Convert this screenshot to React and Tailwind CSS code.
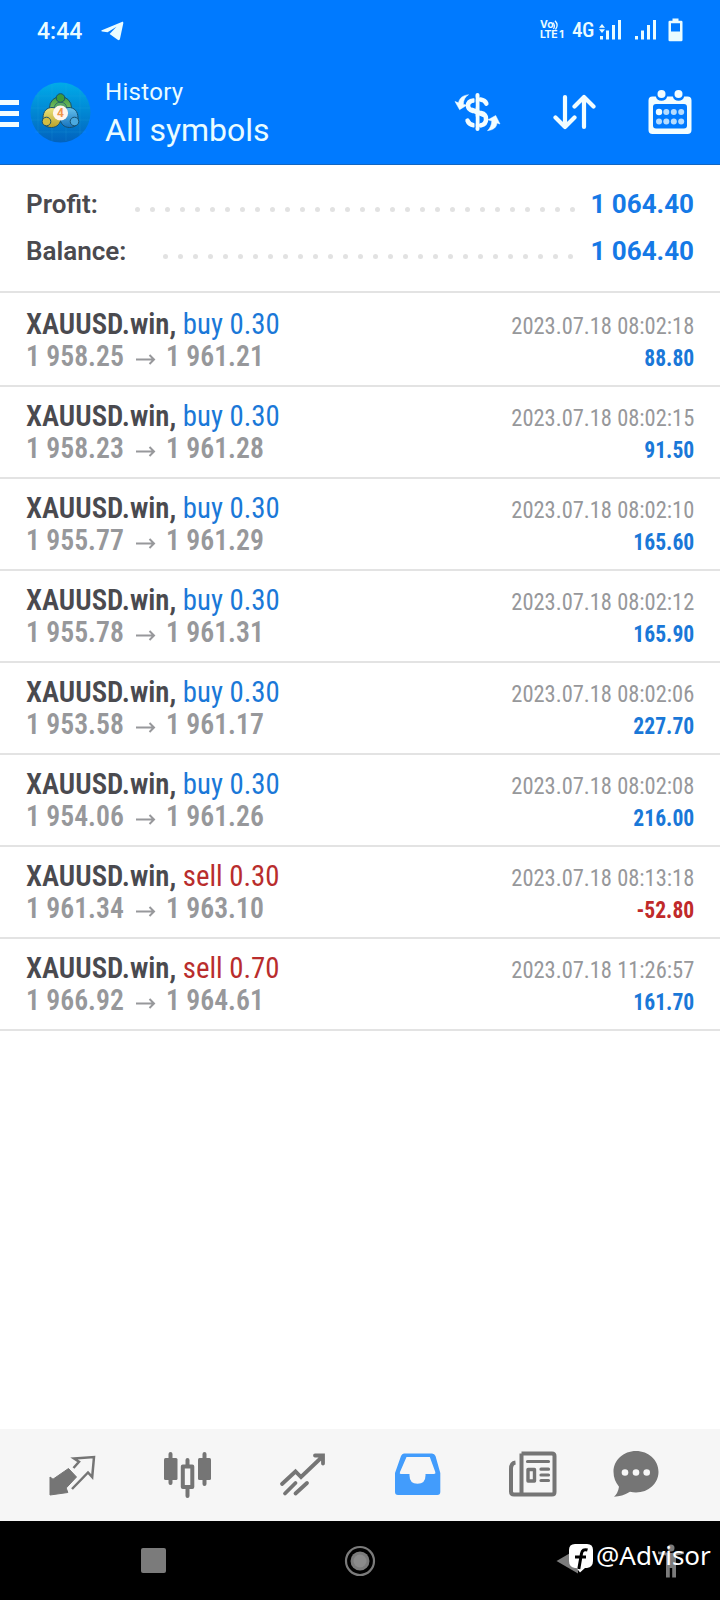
import React from 'react';

const deals = [
  { side: 'buy', volume: '0.30', open: '1 958.25', close: '1 961.21', time: '2023.07.18 08:02:18', profit: '88.80' },
  { side: 'buy', volume: '0.30', open: '1 958.23', close: '1 961.28', time: '2023.07.18 08:02:15', profit: '91.50' },
  { side: 'buy', volume: '0.30', open: '1 955.77', close: '1 961.29', time: '2023.07.18 08:02:10', profit: '165.60' },
  { side: 'buy', volume: '0.30', open: '1 955.78', close: '1 961.31', time: '2023.07.18 08:02:12', profit: '165.90' },
  { side: 'buy', volume: '0.30', open: '1 953.58', close: '1 961.17', time: '2023.07.18 08:02:06', profit: '227.70' },
  { side: 'buy', volume: '0.30', open: '1 954.06', close: '1 961.26', time: '2023.07.18 08:02:08', profit: '216.00' },
  { side: 'sell', volume: '0.30', open: '1 961.34', close: '1 963.10', time: '2023.07.18 08:13:18', profit: '-52.80' },
  { side: 'sell', volume: '0.70', open: '1 966.92', close: '1 964.61', time: '2023.07.18 11:26:57', profit: '161.70' },
];

const SignalBars = () => (
  <svg className="h-5 w-[22px]" viewBox="0 0 22 20" fill="currentColor">
    <rect x="0" y="16" width="3" height="3.5" />
    <rect x="6" y="10.500" width="3" height="9" />
    <rect x="12" y="5" width="3" height="14.500" />
    <rect x="18" y="0" width="3" height="19.500" />
  </svg>
);

const StatusBar = () => (
  <div className="flex h-[60px] items-center pl-[37px] pr-[37px] text-[#eafcff]">
    <span className="mt-[3px] w-[46px] text-[23px] leading-7 font-medium">4:44</span>
    <svg className="mt-px ml-[18px] h-5 w-[23px]" viewBox="0 0 23 20" fill="currentColor">
      <path d="M.8 9.300 20.800.9c1-.4 1.700.2 1.500 1.300L19 17.800c-.3 1.500-1.200 1.700-2.300 1L8.600 12.900 15.500 5.700 6.600 11.200 1.100 10.500C.2 10.300.1 9.600.8 9.300z" />
    </svg>
    <div className="ml-auto flex items-center">
      <div className="relative w-[24px] font-['Inter'] font-bold">
        <p className="text-[10.5px] leading-[10px]">Vo</p>
        <p className="text-[10.5px] leading-[10px] tracking-[-0.4px] whitespace-nowrap">LTE<span className="pl-0.5">1</span></p>
        <svg className="absolute top-0 left-[12px] h-2.5 w-2" viewBox="0 0 8 10" fill="none" stroke="currentColor" strokeWidth="1.300">
          <path d="M1 2.600Q3.500 5.500 1.500 9M3 .8Q7 5 3.500 9.500" />
        </svg>
      </div>
      <span className="ml-[8px] w-5 font-['Roboto_Condensed'] text-[21px] leading-6 font-medium tracking-[-0.4px]">4G</span>
      <div className="relative ml-[8px] flex">
        <SignalBars />
        <svg className="absolute top-[4px] left-[-1px] h-[9px] w-[6px]" viewBox="0 0 6 9" fill="currentColor">
          <path d="M3 0 6 3.800H0zM3 9 0 5.200h6z" />
        </svg>
      </div>
      <div className="ml-[13px] flex">
        <SignalBars />
      </div>
      <svg className="ml-[11px] h-6 w-[15px]" viewBox="0 0 15 24" fill="currentColor">
        <path fillRule="evenodd" d="M4.500 0.500h6v2.200h2.700q1.300 0 1.300 1.300v18q0 1.300-1.300 1.300H1.800Q.5 23.300.5 22V4q0-1.300 1.300-1.300h2.700zM3 5.200v8.300h9V5.200z" />
      </svg>
    </div>
  </div>
);

const Logo = () => (
  <svg className="ml-[11px] size-[61px]" viewBox="0 0 61 61">
    <defs>
      <linearGradient id="disc" x1="0" y1="0" x2="0" y2="1">
        <stop offset="0" stopColor="#00abe9" />
        <stop offset="1" stopColor="#0262bd" />
      </linearGradient>
      <linearGradient id="green" x1="0" y1="0" x2="0" y2="1">
        <stop offset="0" stopColor="#3f9a3e" />
        <stop offset="1" stopColor="#a5da80" />
      </linearGradient>
      <linearGradient id="yellow" x1="0" y1="0" x2="0" y2="1">
        <stop offset="0" stopColor="#ece47c" />
        <stop offset="1" stopColor="#b9a12a" />
      </linearGradient>
      <linearGradient id="blue" x1="0" y1="0" x2="0" y2="1">
        <stop offset="0" stopColor="#67c3ee" />
        <stop offset="1" stopColor="#1672bd" />
      </linearGradient>
    </defs>
    <circle cx="30.500" cy="30.500" r="30" fill="url(#disc)" />
    <path d="M5 14h51M1 26h59M1 38h59M5 50h51M8 10v41M22 2v57M36 2v57M50 8v45" stroke="#35b5e8" strokeOpacity=".2" strokeWidth=".8" />
    <g stroke="#17506f" strokeWidth="1">
      <circle cx="30.500" cy="25.500" r="11" fill="url(#green)" />
      <circle cx="30.500" cy="26.500" r="6.500" fill="#59a866" strokeWidth=".6" />
      <path d="M13 36c0-7 4-10.500 9-10.500 6 0 9 5 9 10 0 6-4 10-9.500 10-3 0-6-1-8.500-4z" fill="url(#yellow)" />
      <path d="M48 36c0-7-4-10.500-9-10.500-6 0-9 5-9 10 0 6 4 10 9.500 10 3 0 6-1 8.500-4z" fill="url(#blue)" />
      <circle cx="30.500" cy="16" r="4.300" fill="#3d9a3c" />
      <circle cx="16.500" cy="39.500" r="4.300" fill="#d3bd42" />
      <circle cx="44.500" cy="39.500" r="4.300" fill="#4ba9df" />
    </g>
    <circle cx="30.500" cy="31" r="7.600" fill="#fff5ec" />
    <text x="30.500" y="35.300" textAnchor="middle" fontFamily="Roboto" fontSize="12" fontWeight="700" fill="#ee9448">4</text>
  </svg>
);

const Header = () => (
  <header className="h-[165px] border-b border-[#1266c2] bg-[#007aff]">
    <StatusBar />
    <div className="flex h-[104px] items-center text-[#f2fdff]">
      <div className="mt-[3px] flex w-[19px] flex-col gap-[6px]">
        <span className="h-[5px] bg-current" />
        <span className="h-[5px] bg-current" />
        <span className="h-[5px] bg-current" />
      </div>
      <Logo />
      <div className="ml-[14px] text-[#e9fcff]">
        <p className="text-2xl leading-[36px] tracking-[0.3px]">History</p>
        <h1 className="text-[32px] leading-[40px]">All symbols</h1>
      </div>
      <svg className="ml-auto h-[40px] w-[48px]" viewBox="0 0 48 40" fill="none" stroke="currentColor">
        <path d="M24.500 3v34" strokeWidth="4" strokeLinecap="round" />
        <path d="M20.500 8.500C13 9.500 13.500 17.500 20 19M27.500 7.500c3.500.5 5 2 5.800 4M28 21c7 1.500 6.500 11 0 12.300M20.500 33.200c-3.500-.5-5-2-5.900-4.500M19 18l11 4.500" strokeWidth="4.600" strokeLinecap="round" />
        <path d="M22 5.500v10M22 24.500v11" stroke="#007aff" strokeWidth="1" />
        <path d="M15.500 2.700C9.500 3.500 6.500 6 5.500 10.800L2 9.500l4.600 8.200 7.200-4.500-3.500-1C10.500 8 12 5 15.500 2.700zM34.500 38.700c6-.8 9-3.300 9.500-7.700l3 1-4.300-8.500-7.700 4.300 3.800 1.300c-.3 4.200-1.800 7.200-4.300 9.600z" fill="currentColor" strokeWidth=".5" strokeLinejoin="round" />
      </svg>
      <svg className="ml-[51px] h-[38px] w-[44px]" viewBox="0 0 44 38" fill="none" stroke="currentColor" strokeWidth="4.200" strokeLinecap="round" strokeLinejoin="round">
        <path d="M13 4v30M3.500 24.500l9.500 9.500 9.500-9.500M32 34V4M22.500 13.500l9.500-9.500 9.500 9.500" />
      </svg>
      <svg className="mr-[27px] ml-[51px] h-[46px] w-[46px]" viewBox="0 0 46 46" fill="currentColor">
        <path fillRule="evenodd" d="M5.500 7.500h3.300q1.300 4.300 5.700 4.300t5.700-4.300h5.600q1.300 4.300 5.700 4.300t5.700-4.300h3.300q4 0 4 4V41q0 4-4 4h-35q-4 0-4-4V11.500q0-4 4-4zM9 15q-3 0-3 3v18.500q0 3 3 3h28q3 0 3-3V18q0-3-3-3z" />
        <circle cx="14.500" cy="5" r="4" />
        <circle cx="31.500" cy="5" r="4" />
        <g fillOpacity=".75">
          <circle cx="12" cy="23" r="3.200" fillOpacity="1" />
          <circle cx="19.300" cy="23" r="3" />
          <circle cx="26.800" cy="23" r="3" />
          <circle cx="34.200" cy="23" r="3" />
          <circle cx="12" cy="32.500" r="3" />
          <circle cx="19.300" cy="32.500" r="3" />
          <circle cx="26.800" cy="32.500" r="3" />
          <circle cx="34.200" cy="32.500" r="3" />
        </g>
      </svg>
    </div>
  </header>
);

const SummaryLine = ({ label, value, dots, dotsClass }) => (
  <div className="flex h-[47px] items-center text-[26px] font-semibold">
    <span className="mt-0.5 text-[#4a4a4f]">{label}</span>
    <div className={`mt-[11px] ml-auto flex gap-[10px] ${dotsClass}`}>
      {Array.from({ length: dots }, (_, i) => (
        <span key={i} className="size-[5px] rounded-full bg-[#e2e2e2]" />
      ))}
    </div>
    <span className="mt-0.5 w-[105px] text-right font-bold whitespace-nowrap text-[#1579e6]">{value}</span>
  </div>
);

const DealRow = ({ deal }) => (
  <li className="flex h-[92px] justify-between border-b-2 border-[#e3e3e3] px-[26px] pt-[13px] font-['Roboto_Condensed'] leading-8 first:h-[94px] first:pt-[15px]">
    <div className="text-[29px]">
      <p className="origin-left scale-x-[0.993] text-[#4a4a4f]">
        <span className="font-semibold">XAUUSD.win,</span>{' '}
        <span className={deal.side === 'buy' ? 'text-[#1a78d8]' : 'text-[#b92d2d]'}>{deal.side} {deal.volume}</span>
      </p>
      <p className="flex font-semibold text-[#97989b]">
        <span className="w-[110px] origin-left scale-x-[0.955]">{deal.open}</span>
        <svg className="mt-[13px] h-[13px] w-[20px]" viewBox="0 0 20 13" fill="none" stroke="currentColor" strokeWidth="2">
          <path d="M0 6.500h18M13.500 2l4.500 4.500-4.500 4.500" />
        </svg>
        <span className="ml-[10px] origin-left scale-x-[0.955]">{deal.close}</span>
      </p>
    </div>
    <div className="pt-0.5 text-right text-2xl leading-8">
      <p className="origin-right scale-x-[0.937] text-[#97989b]">{deal.time}</p>
      <p className={`origin-right scale-x-[0.9] font-bold ${deal.profit.startsWith('-') ? 'text-[#c02a2a]' : 'text-[#1a78d8]'}`}>{deal.profit}</p>
    </div>
  </li>
);

const TabBar = () => (
  <nav className="flex h-[92px] gap-[67px] bg-[#f6f6f6] pt-[21px] pl-12 text-[#757575]">
    <svg className="size-12 shrink-0" viewBox="0 0 48 48">
      <path d="M20.500 18.500 28.500 27l-10.300 11 1.600 4.500L2 45V27l3 2.200z" fill="currentColor" stroke="currentColor" strokeLinejoin="round" />
      <path d="M25.500 18l5.500-6.200-5-3.300 20-1.500-1.800 20-4.200-4.500L24 39" fill="none" stroke="currentColor" strokeWidth="2.500" />
    </svg>
    <svg className="size-12 shrink-0" viewBox="0 0 48 48" fill="none" stroke="currentColor" strokeWidth="4" strokeLinecap="round">
      <path d="M7.500 4v29M41.500 4v30M24.500 10v6M24.500 38v8" />
      <rect x="1" y="8" width="13.500" height="22" rx="1.500" fill="currentColor" stroke="none" />
      <rect x="35" y="8" width="13" height="22" rx="1.500" fill="currentColor" stroke="none" />
      <rect x="19.800" y="16.500" width="9.500" height="20.500" strokeLinejoin="round" />
    </svg>
    <svg className="size-12 shrink-0" viewBox="0 0 48 48" fill="none" stroke="currentColor" strokeWidth="3.800" strokeLinecap="round">
      <path d="M4 34 17.500 21.500l5.500 5.500L44.500 6.500M37 5.500h8v8M7 43.500l10.500-10.500M17.500 43.500 29 33" />
    </svg>
    <svg className="ml-px size-12 shrink-0 text-[#429cfc]" viewBox="0 0 48 48" fill="currentColor">
      <path fillRule="evenodd" d="M10 3.500h28q2.500 0 3.500 2.500L46.300 23v19q0 3-3 3H4q-3 0-3-3V23L7 6q1-2.500 3-2.500zM12.500 7 6 22q-.8 2 .8 2h8.700v1.500q0 8.300 8 8.300t8-8.300V24h8.500q2 0 1.300-2L35.800 7z" />
    </svg>
    <svg className="size-12 shrink-0" viewBox="0 0 48 48" fill="none" stroke="currentColor" strokeWidth="4" strokeLinejoin="round">
      <path d="M12.500 3.500H43q2.500 0 2.500 2.500v36q0 2.500-2.500 2.500H5q-3 0-3-3V19q0-6 4.500-6.500M12.500 3.500v41" />
      <path d="M18.500 11.500h21M32 19.200h7.500M32 25h7.500M32 30.500h7.500" strokeWidth="3.200" strokeLinecap="round" />
      <rect x="19" y="19.500" width="6.500" height="11.500" strokeWidth="3.400" />
    </svg>
    <svg className="-ml-[12px] size-12 shrink-0" viewBox="0 0 48 48">
      <path d="M24 1C36.500 1 46.500 10 46.500 21.800S36.500 42.500 24 42.500q-3 0-6-.8Q10 46.500 2 46.700q4-3.500 5-10Q1.500 30 1.500 21.800C1.500 10 11.500 1 24 1z" fill="currentColor" />
      <g fill="#f6f6f6">
        <circle cx="13" cy="22.500" r="3.300" />
        <circle cx="24" cy="22.500" r="3.300" />
        <circle cx="34.700" cy="22.500" r="3.300" />
      </g>
    </svg>
  </nav>
);

const SystemNav = () => (
  <div className="relative flex h-[79px] items-center bg-black pl-[141px] text-[#7b7b7b]">
    <span className="size-[25px] rounded-[2px] bg-current" />
    <svg className="ml-[178px] size-8" viewBox="0 0 32 32">
      <circle cx="16" cy="16" r="14" fill="none" stroke="currentColor" strokeWidth="2.200" />
      <circle cx="16" cy="16" r="9.500" fill="currentColor" />
      <circle cx="16" cy="16" r="6.500" fill="#8b8b8b" />
    </svg>
    <svg className="ml-[180px] h-[26px] w-[22px]" viewBox="0 0 22 26" fill="currentColor">
      <path d="M.5 13 22 .5v25z" />
    </svg>
    <svg className="ml-[79px] h-[34px] w-[28px]" viewBox="0 0 28 34" fill="currentColor">
      <circle cx="14" cy="4" r="3.500" />
      <path d="M1 7.500 14 9l13-1.500V10l-8 1.500V33.500h-3.800V24h-2.400v9.500H9V11.500L1 10z" />
    </svg>
    <div className="absolute top-[22px] left-[568px] flex items-center text-white">
      <svg className="h-[30px] w-[26px] shrink-0" viewBox="0 0 26 30">
        <path d="M7 1h12q6 0 6 6v11q0 6-6 7h-2l-5 4.500L8.500 25H7q-6-1-6-7V7q0-6 6-6z" fill="#fff" />
        <path d="M19.500 7q-5-1.500-6 3.500L10.800 26M7 14h11" fill="none" stroke="#000" strokeWidth="3" />
      </svg>
      <span className="ml-0.5 -translate-y-[3px] font-['Noto_Sans'] text-[26px] leading-[26px]">@Advisor</span>
    </div>
  </div>
);

export default function App() {
  return (
    <div className="flex h-[1600px] w-[720px] flex-col overflow-hidden bg-white font-['Roboto',sans-serif]">
      <Header />
      <section className="h-[128px] border-b-2 border-[#e3e3e3] px-[26px] pt-[15px]">
        <SummaryLine label="Profit:" value="1 064.40" dots={30} dotsClass="mr-[14px]" />
        <SummaryLine label="Balance:" value="1 064.40" dots={28} dotsClass="mr-4" />
      </section>
      <ul className="flex-1">
        {deals.map((deal) => (
          <DealRow key={deal.time} deal={deal} />
        ))}
      </ul>
      <TabBar />
      <SystemNav />
    </div>
  );
}
